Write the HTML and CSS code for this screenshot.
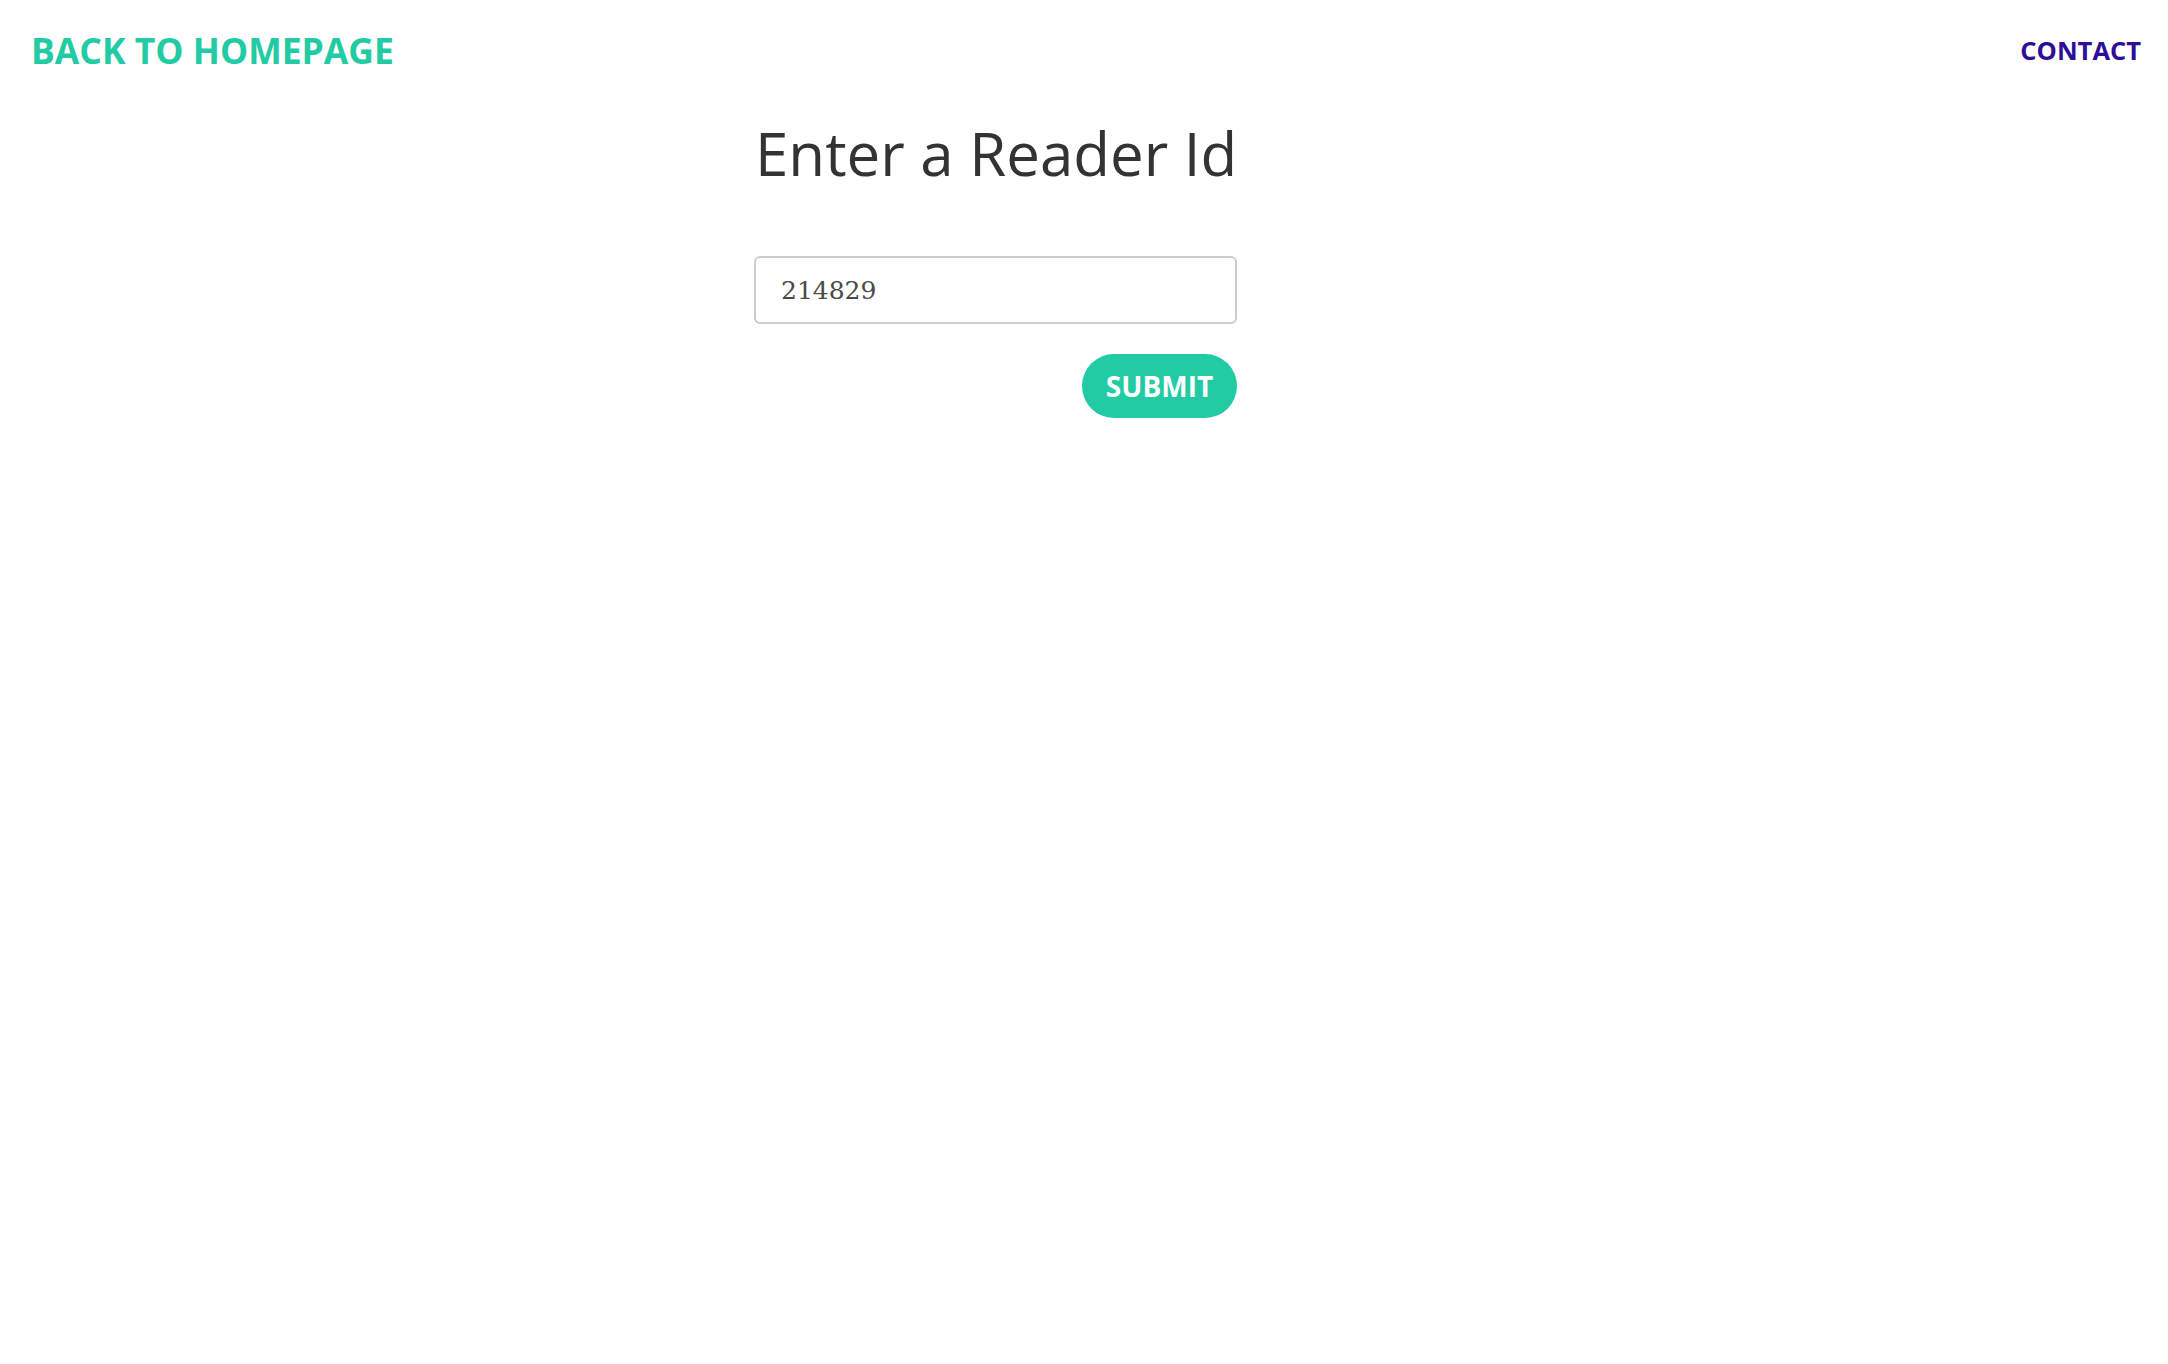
FILE: index.html
```html
<!DOCTYPE html>
<html lang="en">
<head>
<meta charset="utf-8">
<title>Enter a Reader Id</title>
<link rel="stylesheet" href="styles.css">
</head>
<body>
<header class="topbar">
  <a class="home-link" href="#">BACK TO HOMEPAGE</a>
  <a class="contact-link" href="#">CONTACT</a>
</header>
<main class="reader">
  <h1 class="reader-title">Enter a Reader Id</h1>
  <form class="reader-form">
    <input class="reader-input" type="text" value="214829">
    <button class="reader-submit" type="button">SUBMIT</button>
  </form>
</main>
</body>
</html>
```

FILE: styles.css
```css
html, body {
  margin: 0;
  padding: 0;
  background: #ffffff;
}

body {
  font-family: "Open Sans", "Liberation Sans", sans-serif;
  color: #333333;
}

.topbar {
  height: 100px;
  display: flex;
  justify-content: space-between;
  align-items: center;
  padding: 0 27px 0 31px;
}

.home-link {
  font-size: 35.5px;
  font-weight: 700;
  color: #22cba3;
  text-decoration: none;
}

.contact-link {
  font-size: 25.5px;
  font-weight: 700;
  color: #2d0e98;
  text-decoration: none;
}

.reader {
  width: 483px;
  padding-left: 754px;
}

.reader-title {
  margin: 12px 0 0;
  font-size: 60px;
  font-weight: 400;
  color: #333333;
  line-height: normal;
  white-space: nowrap;
  padding-left: 1px;
}

.reader-form {
  margin-top: 62px;
  display: flex;
  flex-direction: column;
  align-items: flex-end;
}

.reader-input {
  box-sizing: border-box;
  width: 483px;
  height: 68px;
  border: 2px solid #cccccc;
  border-radius: 6px;
  padding: 0 25px;
  font-family: "DejaVu Serif", "Liberation Serif", serif;
  font-size: 25px;
  color: #4a4a4a;
  outline: none;
}

.reader-submit {
  margin-top: 30px;
  height: 64px;
  width: 155px;
  border: none;
  border-radius: 32px;
  background: #22cba3;
  color: #ffffff;
  font-family: "Open Sans", "Liberation Sans", sans-serif;
  font-size: 28px;
  font-weight: 700;
  padding: 0;
  cursor: pointer;
}
```
